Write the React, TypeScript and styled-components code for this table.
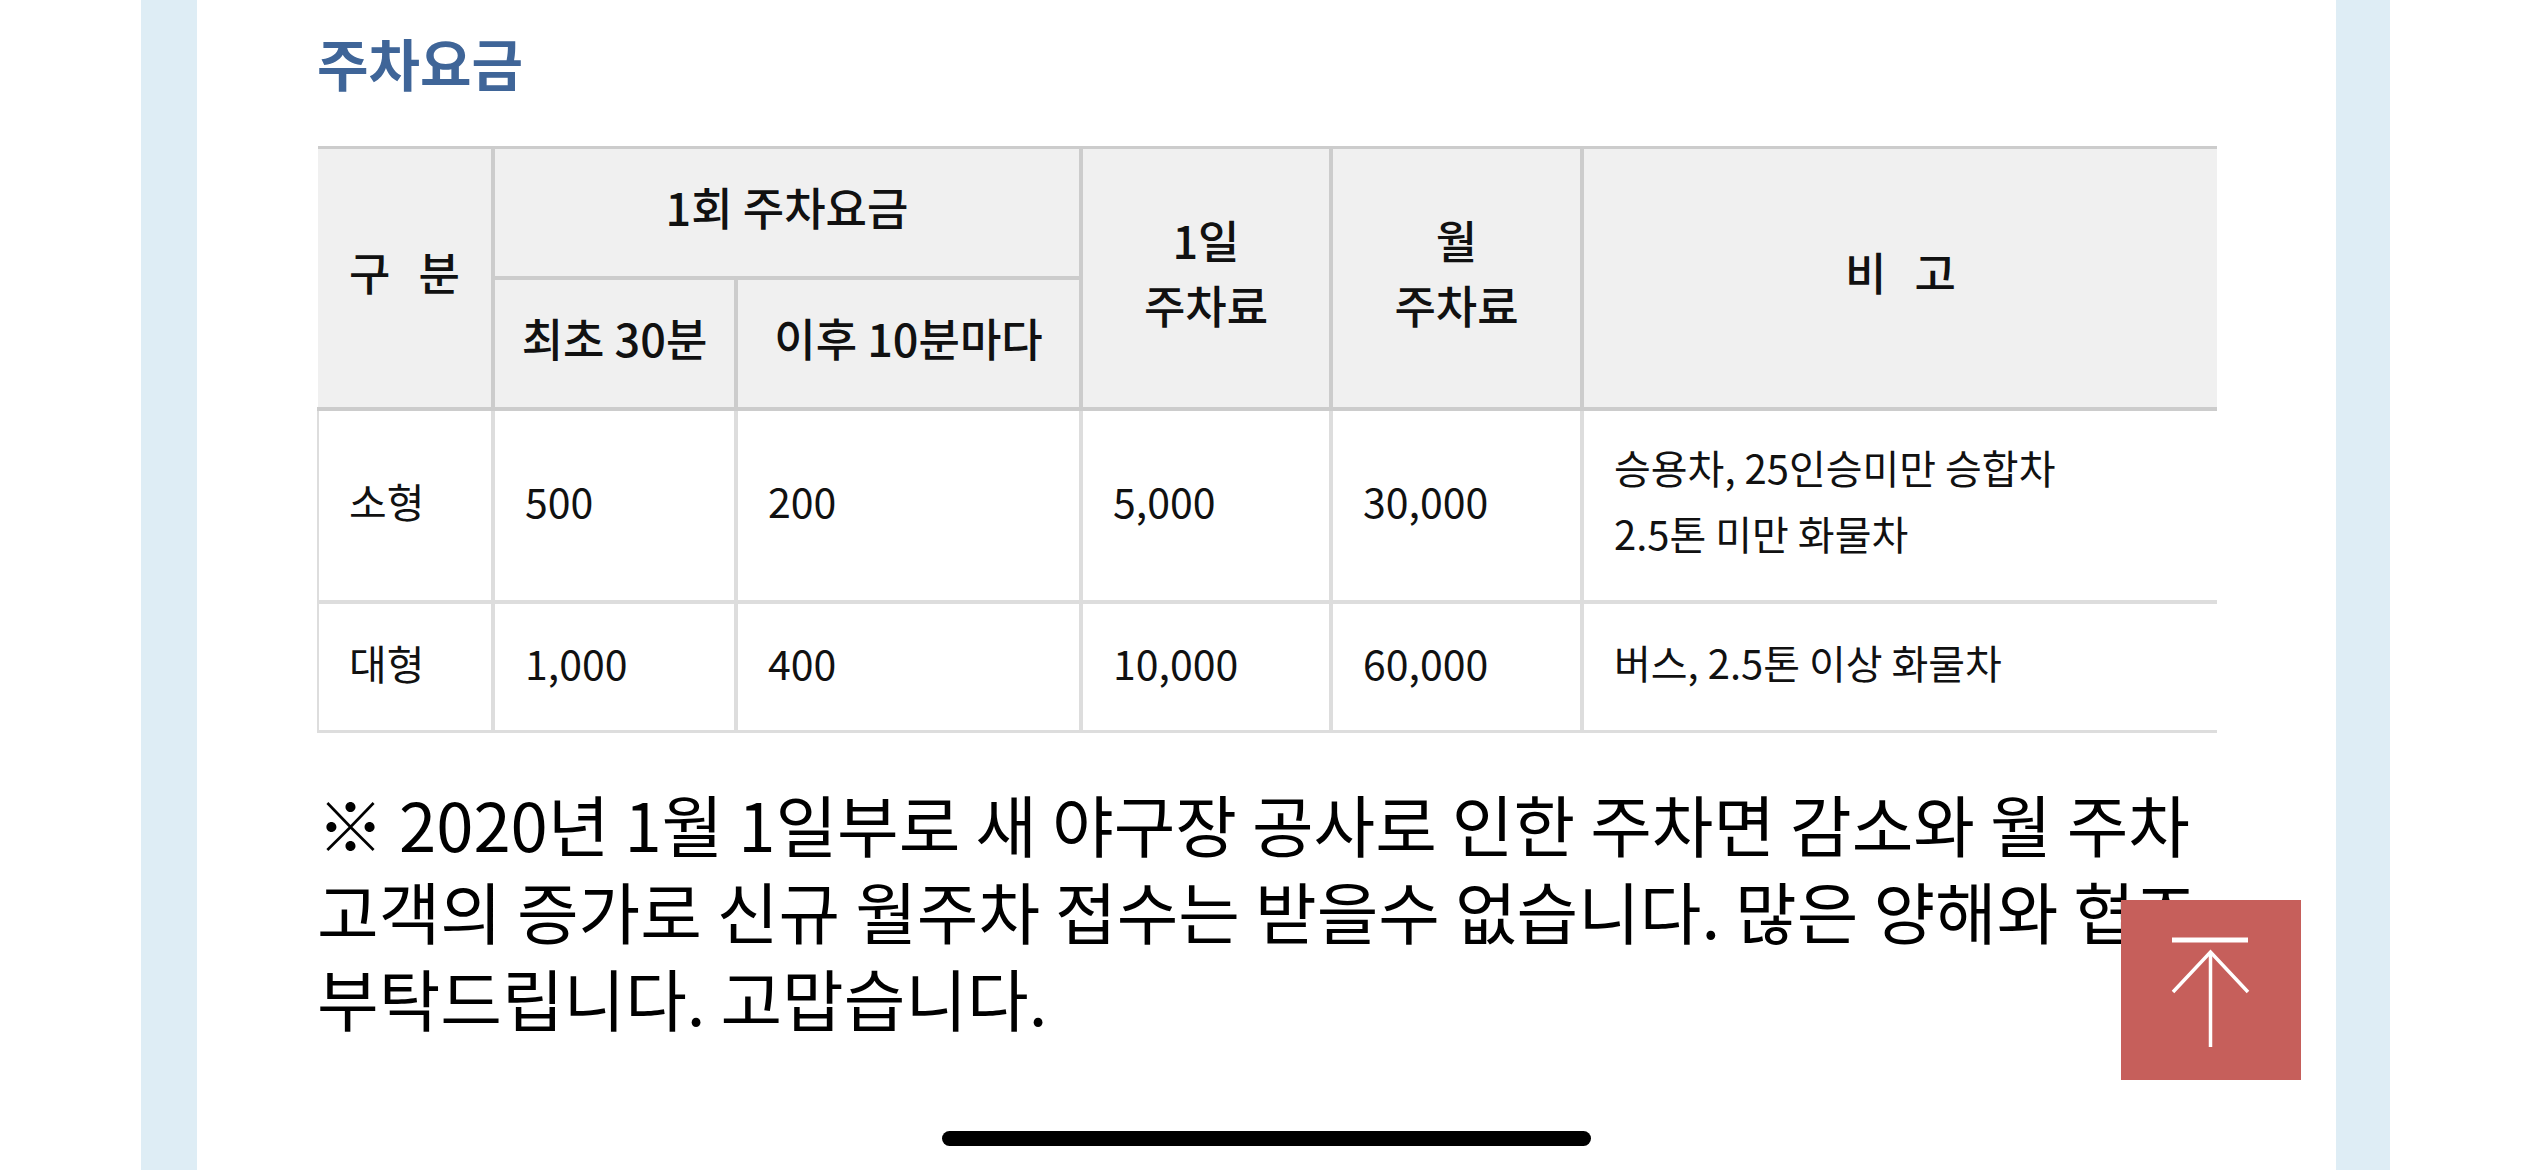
import styled, { createGlobalStyle } from "styled-components";

const GlobalStyle = createGlobalStyle`
  html, body {
    margin: 0;
    padding: 0;
    background: #ffffff;
    overflow: hidden;
  }
  body {
    font-family: "Noto Sans CJK KR", "Noto Sans", sans-serif;
    color: #111111;
  }
`;

type Fee = {
  kind: string;
  first: string;
  after: string;
  day: string;
  month: string;
  note: string[];
  height: number;
};

const fees: Fee[] = [
  {
    kind: "소형",
    first: "500",
    after: "200",
    day: "5,000",
    month: "30,000",
    note: ["승용차, 25인승미만 승합차", "2.5톤 미만 화물차"],
    height: 193,
  },
  {
    kind: "대형",
    first: "1,000",
    after: "400",
    day: "10,000",
    month: "60,000",
    note: ["버스, 2.5톤 이상 화물차"],
    height: 130,
  },
];

const colWidths = [175, 243, 345, 250, 251, 635];

const noticeLines = [
  "※ 2020년 1월 1일부로 새 야구장 공사로 인한 주차면 감소와 월 주차",
  "고객의 증가로 신규 월주차 접수는 받을수 없습니다. 많은 양해와 협조",
  "부탁드립니다. 고맙습니다.",
];

const App = () => {
  return (
    <>
      <GlobalStyle />
      <Page>
        <Frame>
          <Content>
            <Title>주차요금</Title>
            <FeeTable>
              <colgroup>
                {colWidths.map((w, i) => (
                  <col key={i} style={{ width: w }} />
                ))}
              </colgroup>
              <thead>
                <HeadRow $h={130}>
                  <HeadCell rowSpan={2} $spaced>
                    구 분
                  </HeadCell>
                  <HeadCell colSpan={2}>1회 주차요금</HeadCell>
                  <HeadCell rowSpan={2}>
                    1일
                    <br />
                    주차료
                  </HeadCell>
                  <HeadCell rowSpan={2}>
                    월
                    <br />
                    주차료
                  </HeadCell>
                  <HeadCell rowSpan={2} $spaced>
                    비 고
                  </HeadCell>
                </HeadRow>
                <HeadRow $h={131}>
                  <HeadCell>최초 30분</HeadCell>
                  <HeadCell>이후 10분마다</HeadCell>
                </HeadRow>
              </thead>
              <tbody>
                {fees.map((f) => (
                  <BodyRow key={f.kind} $h={f.height}>
                    <Cell>{f.kind}</Cell>
                    <Cell>{f.first}</Cell>
                    <Cell>{f.after}</Cell>
                    <Cell>{f.day}</Cell>
                    <Cell>{f.month}</Cell>
                    <Cell>
                      {f.note.map((line, i) => (
                        <NoteLine key={i}>{line}</NoteLine>
                      ))}
                    </Cell>
                  </BodyRow>
                ))}
              </tbody>
            </FeeTable>
            <Notice>
              {noticeLines.map((line, i) => (
                <NoticeLine key={i}>{line}</NoticeLine>
              ))}
            </Notice>
          </Content>
        </Frame>
      </Page>
      <TopButton type="button" aria-label="맨 위로">
        <svg width="180" height="180" viewBox="0 0 180 180" fill="none">
          <line x1="51" y1="40" x2="127" y2="40" stroke="#ffffff" strokeWidth="5" />
          <polyline
            points="52,92 89.5,52 127,92"
            stroke="#ffffff"
            strokeWidth="3.5"
            strokeLinejoin="miter"
          />
          <line x1="89.5" y1="53" x2="89.5" y2="147" stroke="#ffffff" strokeWidth="3.5" />
        </svg>
      </TopButton>
      <HomeIndicator />
    </>
  );
};

export default App;

const Page = styled.div`
  width: 2532px;
  height: 1170px;
  display: flex;
  background: #ffffff;
`;

const Frame = styled.div`
  margin-left: 141px;
  width: 2249px;
  height: 100%;
  box-sizing: border-box;
  padding: 0 54px 0 56px;
  background: #deedf5;
`;

const Content = styled.div`
  height: 100%;
  box-sizing: border-box;
  padding: 28px 120px 0;
  background: #ffffff;
`;

const Title = styled.h2`
  margin: 0 0 51px;
  font-size: 56px;
  line-height: 1.2;
  font-weight: 700;
  color: #3f6598;
`;

const FeeTable = styled.table`
  width: 1899px;
  table-layout: fixed;
  border-collapse: collapse;
  font-size: 41px;
`;

const HeadRow = styled.tr<{ $h: number }>`
  height: ${(p) => p.$h}px;
`;

const BodyRow = styled.tr<{ $h: number }>`
  height: ${(p) => p.$h}px;
  &:last-child td {
    border-bottom-width: 3px;
  }
`;

const HeadCell = styled.th<{ $spaced?: boolean }>`
  padding: 0 0 12px;
  background: #f0f0f0;
  border: 4px solid #cccccc;
  font-size: 45px;
  font-weight: 500;
  line-height: 65px;
  text-align: center;
  vertical-align: middle;
  word-spacing: ${(p) => (p.$spaced ? "18px" : "0")};
  color: #111111;
  tr:first-child > & {
    border-top-width: 3px;
  }
  tr:first-child > &:first-child {
    border-left: none;
  }
  tr:first-child > &:last-child {
    border-right: none;
  }
`;

const Cell = styled.td`
  padding: 0 0 10px 30px;
  border: 4px solid #dddddd;
  line-height: 66px;
  text-align: left;
  vertical-align: middle;
  color: #111111;
  &:first-child {
    border-left-width: 2px;
  }
  &:last-child {
    border-right: none;
  }
`;

const NoteLine = styled.div`
  font-size: 40px;
`;

const Notice = styled.p`
  margin: 46px 0 0;
  font-size: 67px;
  line-height: 87px;
  color: #000000;
`;

const NoticeLine = styled.span`
  display: block;
  white-space: nowrap;
`;

const TopButton = styled.button`
  position: fixed;
  right: 231px;
  bottom: 90px;
  width: 180px;
  height: 180px;
  padding: 0;
  border: none;
  background: #c65f5b;
  display: flex;
  align-items: center;
  justify-content: center;
  cursor: pointer;
`;

const HomeIndicator = styled.div`
  position: fixed;
  left: 942px;
  bottom: 24px;
  width: 649px;
  height: 15px;
  border-radius: 8px;
  background: #000000;
`;
